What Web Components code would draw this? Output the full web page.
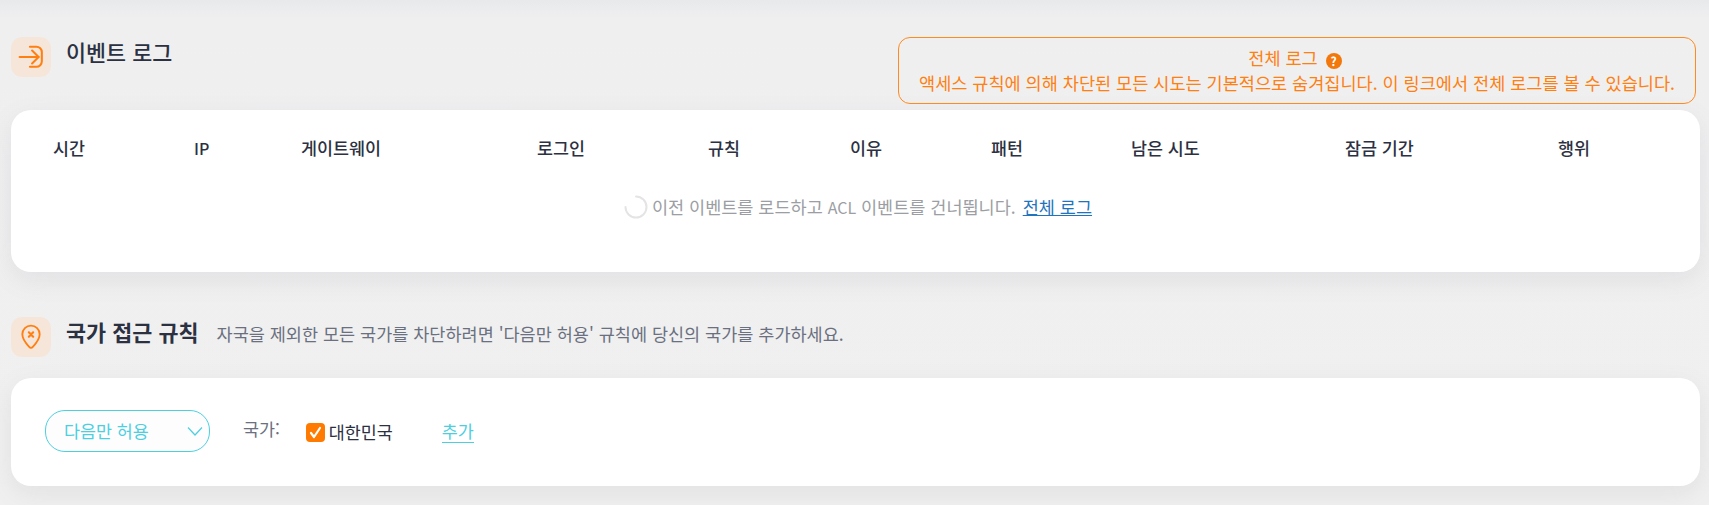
<!DOCTYPE html>
<html lang="ko">
<head>
<meta charset="utf-8">
<title>이벤트 로그</title>
<style>
    html, body { margin: 0; height: 505px; overflow: hidden; }
    body {
        background: linear-gradient(#e8e9eb 0, #efeff0 18px, #f0f0f0 100%);
        font-family: "Noto Sans CJK KR", "Noto Sans", sans-serif;
        color: #2c3142;
    }
    app-page { padding: 37px 9px 0 11px; }
</style>
</head>
<body>
<app-page>
    <section-head heading="이벤트 로그" style="height:73px">
        <svg slot="icon" viewBox="0 0 24 24" width="26" height="26" fill="none" stroke="#ff7f11" stroke-width="1.9" stroke-linecap="round" stroke-linejoin="round">
            <path d="M11 2.500h6a5 5 0 0 1 5 5v8.500a5 5 0 0 1-5 5h-6"/>
            <path d="M1.500 12h17.500"/>
            <path d="M13 6l6 6-6 6"/>
        </svg>
        <notice-box slot="aside" heading="전체 로그">액세스 규칙에 의해 차단된 모든 시도는 기본적으로 숨겨집니다. 이 링크에서 전체 로그를 볼 수 있습니다.</notice-box>
    </section-head>
    <panel-card style="height:162px">
        <event-table></event-table>
    </panel-card>

    <section-head heading="국가 접근 규칙" strong style="height:61px;margin-top:45px">
        <svg slot="icon" viewBox="0 0 24 24" width="26" height="26" fill="none" stroke="#ff7f11" stroke-width="1.7" stroke-linecap="round" stroke-linejoin="round">
            <path d="M12 22c-.7 0-1.300-.5-1.900-1.200C7 17.500 4 14 4 9.500a8 8 0 0 1 16 0c0 4.500-3 8-6.100 11.300-.6.7-1.200 1.200-1.900 1.200z"/>
            <path d="M10 7.700l4 4M14 7.700l-4 4" stroke-width="2"/>
        </svg>
        <span slot="desc">자국을 제외한 모든 국가를 차단하려면 '다음만 허용' 규칙에 당신의 국가를 추가하세요.</span>
    </section-head>
    <panel-card style="height:108px">
        <country-rule></country-rule>
    </panel-card>
</app-page>

<script>
class AppPage extends HTMLElement {
    constructor(){
        super();
        this.attachShadow({mode: 'open'});
        this.shadowRoot.innerHTML = `
            <style>
                :host { display: block; }
            </style>
            <slot></slot>
        `;
    }
}

class SectionHead extends HTMLElement {
    constructor(){
        super();
        this.attachShadow({mode: 'open'});
        const strong = this.hasAttribute('strong');
        this.shadowRoot.innerHTML = `
            <style>
                :host { display: flex; align-items: flex-start; }
                .badge {
                    width: 40px;
                    height: 40px;
                    border-radius: 11px;
                    background: #f6e6da;
                    display: flex;
                    align-items: center;
                    justify-content: center;
                    flex: none;
                }
                h2 {
                    margin: -1px 0 0 15px;
                    font-size: 21.800px;
                    line-height: 32px;
                    font-weight: ${strong ? 700 : 500};
                    color: #2c3142;
                    white-space: nowrap;
                }
                .desc {
                    margin: 5px 0 0 18px;
                    font-size: 17.500px;
                    line-height: 24px;
                    color: #6b7080;
                    white-space: nowrap;
                }
                .aside { margin-left: auto; margin-right: 4px; }
            </style>
            <div class="badge"><slot name="icon"></slot></div>
            <h2>${this.getAttribute('heading')}</h2>
            <div class="desc"><slot name="desc"></slot></div>
            <div class="aside"><slot name="aside"></slot></div>
        `;
    }
}

class NoticeBox extends HTMLElement {
    constructor(){
        super();
        this.attachShadow({mode: 'open'});
        this.shadowRoot.innerHTML = `
            <style>
                :host {
                    display: block;
                    box-sizing: border-box;
                    width: 798px;
                    height: 67px;
                    border: 1px solid #ff8a1f;
                    border-radius: 12px;
                    color: #ff7f11;
                    font-size: 17.550px;
                    line-height: 25px;
                    text-align: center;
                    padding-top: 7px;
                }
                .title { padding-right: 4px; }
                .q {
                    display: inline-block;
                    width: 16px;
                    height: 16px;
                    margin-left: 3px;
                    border-radius: 50%;
                    background: #f2780c;
                    color: #fff;
                    font-size: 12px;
                    font-weight: 700;
                    line-height: 16px;
                    vertical-align: -1px;
                }
            </style>
            <div class="title">${this.getAttribute('heading')} <span class="q">?</span></div>
            <div><slot></slot></div>
        `;
    }
}

class PanelCard extends HTMLElement {
    constructor(){
        super();
        this.attachShadow({mode: 'open'});
        this.shadowRoot.innerHTML = `
            <style>
                :host {
                    display: block;
                    box-sizing: border-box;
                    background: #fff;
                    border-radius: 20px;
                    box-shadow: 0 8px 24px rgba(120, 125, 140, .12);
                }
            </style>
            <slot></slot>
        `;
    }
}

class EventTable extends HTMLElement {
    constructor(){
        super();
        this.attachShadow({mode: 'open'});
        const cols = ['시간', '<span class="lat">IP</span>', '게이트웨이', '로그인', '규칙', '이유', '패턴', '남은 시도', '잠금 기간', '행위'];
        this.shadowRoot.innerHTML = `
            <style>
                :host { display: block; padding: 0 0 0 42px; }
                .row {
                    display: grid;
                    grid-template-columns: 141px 107px 236px 171px 142px 141px 140px 214px 213px 1fr;
                    height: 74px;
                    align-items: center;
                    font-size: 17.400px;
                    font-weight: 500;
                    color: #2c3142;
                }
                .lat { font-size: 16px; }
                .loading {
                    display: flex;
                    align-items: center;
                    justify-content: center;
                    margin: 11px 0 0 -42px;
                    padding-left: 5px;
                    font-size: 17.500px;
                    line-height: 24px;
                    color: #9b9ea3;
                }
                .spin { margin-right: 4px; flex: none; }
                a { color: #1f74bd; margin-left: 7px; text-decoration: underline; }
            </style>
            <div class="row">${cols.map(c => `<div>${c}</div>`).join('')}</div>
            <div class="loading">
                <svg class="spin" width="24" height="24" viewBox="0 0 24 24" fill="none" stroke="#e4e4e4" stroke-width="2" stroke-linecap="round">
                    <path d="M12 1.500a10.500 10.500 0 1 1-10.500 10.500"/>
                </svg>
                <span>이전 이벤트를 로드하고 <span class="lat">ACL</span> 이벤트를 건너뜁니다.</span>
                <a href="#">전체 로그</a>
            </div>
        `;
    }
}

class CountryRule extends HTMLElement {
    constructor(){
        super();
        this.attachShadow({mode: 'open'});
        this.shadowRoot.innerHTML = `
            <style>
                :host {
                    display: flex;
                    align-items: flex-start;
                    padding: 32px 0 0 34px;
                    font-size: 17.400px;
                    line-height: 24px;
                }
                .select {
                    box-sizing: border-box;
                    width: 165px;
                    height: 42px;
                    border: 1px solid #4dcfe0;
                    border-radius: 20px;
                    background: #fdfdfe;
                    color: #4dcfe0;
                    display: flex;
                    align-items: center;
                    justify-content: space-between;
                    padding: 0 6px 0 18px;
                }
                .label { margin: 7px 0 0 33px; color: #6b7080; }
                .check {
                    display: flex;
                    align-items: center;
                    margin: 10px 0 0 26px;
                    color: #2c3142;
                }
                .box {
                    width: 19px;
                    height: 19px;
                    border-radius: 4px;
                    background: #ff7a00;
                    margin-right: 4px;
                    display: flex;
                    align-items: center;
                    justify-content: center;
                }
                a {
                    margin: 9px 0 0 49px;
                    color: #4dcfe0;
                    text-decoration: none;
                    border-bottom: 1px solid #4dcfe0;
                    line-height: 23px;
                }
            </style>
            <div class="select">
                <span>다음만 허용</span>
                <svg width="16" height="11" viewBox="0 0 16 11" fill="none" stroke="#4dcfe0" stroke-width="1.200"><path d="M1 1.500l7 7.500 7-7.500"/></svg>
            </div>
            <div class="label">국가:</div>
            <div class="check">
                <span class="box"><svg width="13" height="13" viewBox="0 0 13 13" fill="none" stroke="#fff" stroke-width="2.200" stroke-linecap="round" stroke-linejoin="round"><path d="M2 7l3 4 6-9"/></svg></span>
                <span>대한민국</span>
            </div>
            <a href="#">추가</a>
        `;
    }
}

customElements.define('app-page', AppPage);
customElements.define('section-head', SectionHead);
customElements.define('notice-box', NoticeBox);
customElements.define('panel-card', PanelCard);
customElements.define('event-table', EventTable);
customElements.define('country-rule', CountryRule);
</script>
</body>
</html>
